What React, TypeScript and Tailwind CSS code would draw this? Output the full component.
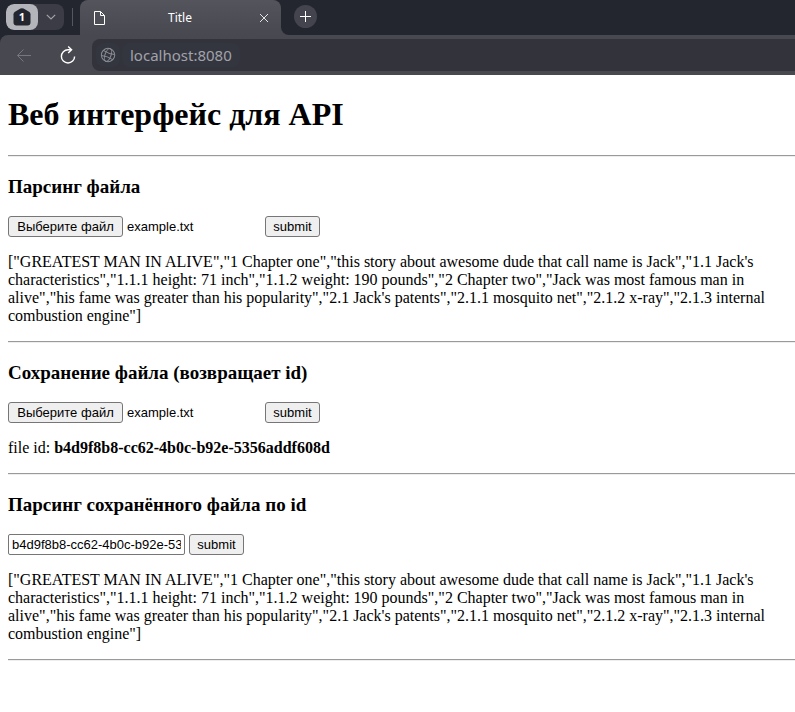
import { useRef, useState } from "react";

const PARSED =
  '["GREATEST MAN IN ALIVE","1 Chapter one","this story about awesome dude that call name is Jack","1.1 Jack\'s characteristics","1.1.1 height: 71 inch","1.1.2 weight: 190 pounds","2 Chapter two","Jack was most famous man in alive","his fame was greater than his popularity","2.1 Jack\'s patents","2.1.1 mosquito net","2.1.2 x-ray","2.1.3 internal combustion engine"]';
const FILE_ID = "b4d9f8b8-cc62-4b0c-b92e-5356addf608d";

const controlClass =
  "h-[21px] rounded-[3px] border border-[#767676] bg-[#efefef] font-['Liberation_Sans',sans-serif] text-[13px] leading-4";

function Browser() {
  return (
    <header className="bg-[#24262f] font-['Noto_Sans',sans-serif]">
      <div className="flex h-[35px]">
        <div className="flex w-20 shrink-0 items-start pl-1.5 pt-1">
          <div className="flex h-[26px] w-[58px] overflow-hidden rounded-lg bg-[#3c3c46]">
            <button
              aria-label="Tab group 1"
              className="relative flex w-8 items-center justify-center rounded-lg bg-[#b4b5ba]"
            >
              <svg width="18" height="20" viewBox="0 0 18 20" fill="#24262f" aria-hidden="true">
                <path d="M7.5 1.6Q9 .8 10.500 1.600L16 4.700Q17.500 5.600 17.500 7.200V15.500Q17.500 18.500 14.500 18.500H3.500Q.5 18.500.5 15.500V7.200Q.5 5.600 2 4.700Z" />
              </svg>
              <span className="absolute inset-0 text-center text-[11px] font-bold leading-[26px] text-white">1</span>
            </button>
            <button aria-label="Show groups" className="flex flex-1 items-center justify-center">
              <svg width="10" height="6" viewBox="0 0 10 6" fill="none" stroke="#a0a0a7" strokeWidth="1.200" aria-hidden="true">
                <path d="M.8.8 5 5 9.200.8" />
              </svg>
            </button>
          </div>
          <div className="ml-2 mt-1 h-[18px] w-px bg-[#55565f]" />
        </div>
        <div className="flex w-[201px] shrink-0 items-center rounded-t-lg bg-linear-to-b from-[#54545c] to-[#484850] pl-3.5 pr-3 text-white">
          <svg width="11" height="14" viewBox="0 0 11 14" fill="none" stroke="#fff" aria-hidden="true">
            <path d="M.5.5H6.500L10.500 4.500V13.500H.5ZM6.500.5V4.500H10.500" />
          </svg>
          <span className="flex-1 pr-1 text-center text-[12px] leading-4">Title</span>
          <button aria-label="Close tab">
            <svg width="10" height="10" viewBox="0 0 10 10" stroke="#e4e4e6" aria-hidden="true">
              <path d="M1 1 9 9M9 1 1 9" />
            </svg>
          </button>
        </div>
        <div className="flex-1 bg-[#484850]">
          <div className="h-full rounded-bl-lg bg-[#24262f] pl-[13px] pt-[5px]">
            <button
              aria-label="New tab"
              className="flex size-[23px] items-center justify-center rounded-full bg-[#44444e]"
            >
              <svg width="11" height="11" viewBox="0 0 11 11" stroke="#fff" aria-hidden="true">
                <path d="M5.500 0V11M0 5.500H11" />
              </svg>
            </button>
          </div>
        </div>
      </div>
      <div className="flex h-10 items-center rounded-tl-lg bg-[#484850] pl-4">
        <button aria-label="Back" className="mr-7">
          <svg width="16" height="14" viewBox="0 0 16 14" fill="none" stroke="#777780" aria-hidden="true">
            <path d="M15 7.500H1.500M7.500 1.500 1.500 7.500 7.500 13.500" />
          </svg>
        </button>
        <button aria-label="Reload" className="mr-4">
          <svg width="16" height="18" viewBox="0 0 16 18" fill="none" stroke="#fff" strokeWidth="1.400" aria-hidden="true">
            <path d="M11.500 3.800H8A6.600 6.600 0 1 0 14.600 10.400M8.200.5 11.600 3.800 8.200 7.100" />
          </svg>
        </button>
        <div className="flex h-8 flex-1 items-center rounded-l-lg bg-[#33333c] pl-1">
          <span className="flex size-6 items-center justify-center rounded-lg bg-[#34363f]">
            <svg width="16" height="16" viewBox="0 0 16 16" fill="none" stroke="#8b8c94" aria-hidden="true">
              <g transform="rotate(20 8 8)">
                <circle cx="8" cy="8" r="6.700" />
                <ellipse cx="8" cy="8" rx="3" ry="6.700" />
                <path d="M2 5.300Q8 6.800 14 5.300M2 10.700Q8 9.200 14 10.700" />
              </g>
            </svg>
          </span>
          <input
            aria-label="Address"
            defaultValue="localhost:8080"
            className="ml-0.5 h-6 w-[118px] rounded-lg bg-[#34363f] pl-2 text-[15px] leading-6 text-[#a2a2aa] outline-none"
          />
        </div>
      </div>
    </header>
  );
}

function Rule() {
  return <hr className="h-0.5 border-t border-b border-t-[#9a9a9a] border-b-[#eeeeee]" />;
}

function Heading({ children }: { children: string }) {
  return <h3 className="my-[19px] text-[19px] font-bold leading-[21px]">{children}</h3>;
}

function SubmitButton() {
  return <button type="submit" className={`${controlClass} w-[55px]`}>submit</button>;
}

function FileForm({ id }: { id: string }) {
  const picker = useRef<HTMLInputElement>(null);
  const [name, setName] = useState("example.txt");
  return (
    <form className="flex gap-1" onSubmit={(e) => e.preventDefault()}>
      <div className="flex w-[253px] items-center gap-1">
        <button type="button" className={`${controlClass} w-[115px] whitespace-nowrap`} onClick={() => picker.current?.click()}>
          Выберите файл
        </button>
        <label htmlFor={id} className="font-['Liberation_Sans',sans-serif] text-[13px] leading-4">{name}</label>
        <input
          ref={picker}
          id={id}
          type="file"
          className="hidden"
          onChange={(e) => setName(e.target.files?.[0]?.name ?? name)}
        />
      </div>
      <SubmitButton />
    </form>
  );
}

export default function App() {
  return (
    <div className="min-h-screen bg-white text-black">
      <Browser />
      <main className="pb-4 pl-2 font-['Liberation_Serif',serif] text-[16px] leading-[18px]">
        <h1 className="pb-[22px] pt-[21px] text-[32px] font-bold leading-[37px]">Веб интерфейс для API</h1>
        <Rule />
        <section>
          <Heading>Парсинг файла</Heading>
          <FileForm id="parse-file" />
          <p className="my-4 pr-2">{PARSED}</p>
        </section>
        <Rule />
        <section>
          <Heading>Сохранение файла (возвращает id)</Heading>
          <FileForm id="save-file" />
          <p className="my-4 pr-2">
            file id: <b>{FILE_ID}</b>
          </p>
        </section>
        <Rule />
        <section>
          <Heading>Парсинг сохранённого файла по id</Heading>
          <form className="flex gap-1" onSubmit={(e) => e.preventDefault()}>
            <input
              aria-label="id"
              defaultValue={FILE_ID}
              className="h-[21px] w-[177px] rounded-[2px] border border-[#767676] bg-white px-[3px] font-['Liberation_Sans',sans-serif] text-[13px] leading-4"
            />
            <SubmitButton />
          </form>
          <p className="my-4 pr-2">{PARSED}</p>
        </section>
        <Rule />
      </main>
    </div>
  );
}
